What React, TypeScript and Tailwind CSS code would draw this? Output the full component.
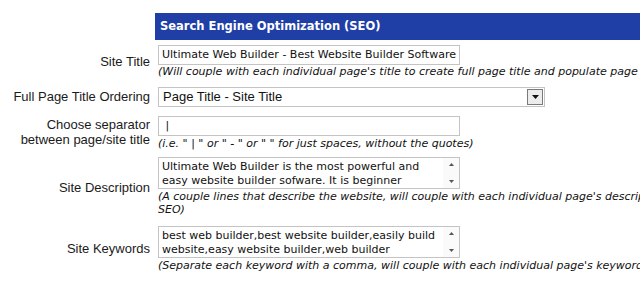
const verdana = { fontFamily: '"DejaVu Sans", Verdana, sans-serif' };

function Label({ children }: { children: React.ReactNode }) {
  return (
    <div
      className="w-[155px] shrink-0 flex items-center justify-end pr-[5px] text-right text-[13px] leading-[15px] text-[#1a1a1a]"
      style={{ fontFamily: '"Liberation Sans", Arial, sans-serif' }}
    >
      <div>{children}</div>
    </div>
  );
}

function Help({ children }: { children: React.ReactNode }) {
  return (
    <div className="text-[11px] leading-[13px] italic text-[#111] whitespace-nowrap" style={verdana}>
      {children}
    </div>
  );
}

function FakeTextarea({ lines }: { lines: string[] }) {
  return (
    <div className="flex w-[302px] h-[32px] border border-[#c4c4c4] bg-white">
      <div className="flex-1 overflow-hidden pl-[3px] pt-[2px] text-[11px] leading-[14px] text-[#111]" style={verdana}>
        {lines.map((l) => (
          <div key={l} className="whitespace-nowrap">{l}</div>
        ))}
      </div>
      <div className="w-[16px] flex flex-col justify-between items-center py-[5px] bg-[#fafafa]">
        <svg width="5" height="3" viewBox="0 0 5 3"><path d="M2.5 0 L5 3 L0 3 Z" fill="#555" /></svg>
        <svg width="5" height="3" viewBox="0 0 5 3"><path d="M0 0 L5 0 L2.5 3 Z" fill="#555" /></svg>
      </div>
    </div>
  );
}

export default function App() {
  return (
    <div className="w-[640px] h-[303px] overflow-hidden bg-white pt-[13px]">
      {/* header */}
      <div className="flex">
        <div className="w-[155px] shrink-0" />
        <div
          className="flex-1 h-[27px] bg-[#1f3fa6] text-white font-bold text-[11.5px] flex items-center pl-[5px]"
          style={verdana}
        >
          Search Engine Optimization (SEO)
        </div>
      </div>

      {/* site title */}
      <div className="flex h-[41px] mt-[1px]">
        <Label>Site Title</Label>
        <div className="pl-[3px] pt-[4px] min-w-0">
          <div
            className="w-[302px] h-[20px] border border-[#c4c4c4] flex items-center pl-[3px] text-[11px] text-[#111] whitespace-nowrap overflow-hidden"
            style={verdana}
          >
            Ultimate Web Builder - Best Website Builder Software
          </div>
          <Help>(Will couple with each individual page's title to create full page title and populate page &lt;title&gt; tag)</Help>
        </div>
      </div>

      {/* ordering */}
      <div className="flex h-[29px]">
        <Label>Full Page Title Ordering</Label>
        <div className="pl-[3px] pt-[5px]">
          <div className="w-[387px] h-[20px] border border-[#c4c4c4] flex items-center justify-between bg-white">
            <span className="pl-[4px] text-[13px] text-[#111]" style={{ fontFamily: '"Liberation Sans", Arial, sans-serif' }}>
              Page Title - Site Title
            </span>
            <div className="w-[16px] h-[16px] mr-[1px] border border-[#7a7a7a] bg-[#ececec] flex items-center justify-center">
              <svg width="7" height="4" viewBox="0 0 7 4"><path d="M0 0 L7 0 L3.5 4 Z" fill="#111" /></svg>
            </div>
          </div>
        </div>
      </div>

      {/* separator */}
      <div className="flex h-[42px]">
        <Label>
          Choose separator
          <br />
          between page/site title
        </Label>
        <div className="pl-[3px] pt-[5px]">
          <div
            className="w-[302px] h-[20px] border border-[#c4c4c4] flex items-center pl-[3px] text-[11px] text-[#111] whitespace-pre"
            style={verdana}
          >
            {' | '}
          </div>
          <div className="mt-[1px]">
            <Help>(i.e. " | " or " - " or " " for just spaces, without the quotes)</Help>
          </div>
        </div>
      </div>

      {/* description */}
      <div className="flex h-[68px]">
        <Label>Site Description</Label>
        <div className="pl-[3px] pt-[4px]">
          <FakeTextarea lines={['Ultimate Web Builder is the most powerful and', 'easy website builder sofware. It is beginner']} />
          <div className="mt-[1px]">
            <Help>
              (A couple lines that describe the website, will couple with each individual page's description for
              <br />
              SEO)
            </Help>
          </div>
        </div>
      </div>

      {/* keywords */}
      <div className="flex h-[54px]">
        <Label>Site Keywords</Label>
        <div className="pl-[3px] pt-[5px]">
          <FakeTextarea lines={['best web builder,best website builder,easily build', 'website,easy website builder,web builder']} />
          <div className="mt-[1px]">
            <Help>(Separate each keyword with a comma, will couple with each individual page's keywords for SEO)</Help>
          </div>
        </div>
      </div>
    </div>
  );
}
